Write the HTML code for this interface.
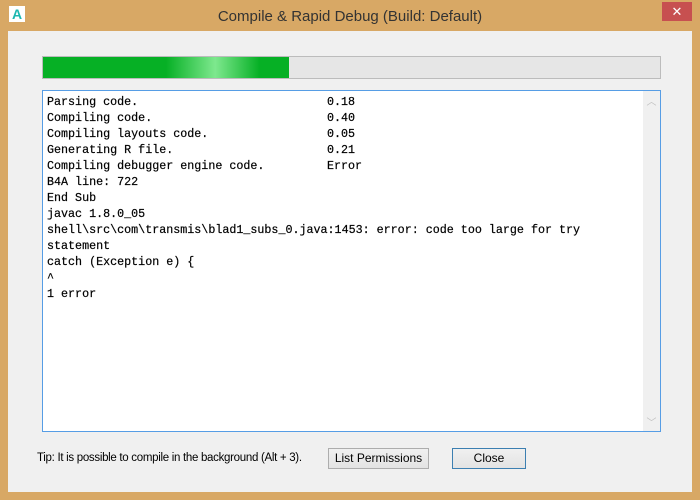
<!DOCTYPE html><html><head><style>
body{margin:0;width:700px;height:500px;background:#d8a865;position:relative;overflow:hidden;font-family:"Liberation Sans",sans-serif}
.abs{position:absolute}
#client{left:8px;top:31px;width:684px;height:461px;background:#f0f0f0}
#title{left:0;width:700px;top:8px;text-align:center;font-size:15px;color:#333}
#icon{left:9px;top:6px;width:16px;height:16px;background:#fff;color:#1cb8b0;font-weight:bold;font-size:14px;text-align:center;line-height:16px}
#x{left:662px;top:2px;width:30px;height:19px;background:#c75050;color:#fff;text-align:center;font-size:13px;line-height:19px}
#pb{left:42px;top:56px;width:617px;height:21px;background:#e6e6e6;border:1px solid #bcbcbc}
#fill{left:0;top:0;width:246px;height:21px;background:linear-gradient(90deg,#06b025 0%,#06b025 50%,#7ee88e 70%,#06b025 88%,#06b025 100%)}
#tb{left:42px;top:90px;width:617px;height:340px;background:#fff;border:1px solid #569de5}
#sb{right:0;top:0;width:17px;height:340px;background:#f0f0f0;color:#c0c0c0;font-size:10px;text-align:center}
pre{margin:0;position:absolute;left:4px;top:3px;font-family:"Liberation Mono",monospace;font-size:11.7px;line-height:16px;color:#000;-webkit-text-stroke:0.2px #000}
pre span{position:absolute;left:280px}
.btn{top:448px;height:19px;background:linear-gradient(#f0f0f0,#e3e3e3);border:1px solid #adadad;font-size:12px;text-align:center;line-height:19px;color:#000}
</style></head><body>
<div class="abs" id="client"></div>
<div class="abs" id="icon">A</div>
<div class="abs" id="title">Compile &amp; Rapid Debug (Build: Default)</div>
<div class="abs" id="x">✕</div>
<div class="abs" id="pb"><div class="abs" id="fill"></div></div>
<div class="abs" id="tb"><pre>Parsing code.<span>0.18</span>
Compiling code.<span>0.40</span>
Compiling layouts code.<span>0.05</span>
Generating R file.<span>0.21</span>
Compiling debugger engine code.<span>Error</span>
B4A line: 722
End Sub
javac 1.8.0_05
shell\src\com\transmis\blad1_subs_0.java:1453: error: code too large for try
statement
catch (Exception e) {
^
1 error</pre><div class="abs" id="sb"><div style="margin-top:2px">︿</div><div style="position:absolute;bottom:2px;width:17px">﹀</div></div></div>
<div class="abs" style="left:37px;top:452px;font-size:11.5px;letter-spacing:-0.3px;color:#000">Tip: It is possible to compile in the background (Alt + 3).</div>
<div class="abs btn" style="left:328px;width:99px">List Permissions</div>
<div class="abs btn" style="left:452px;width:72px;border-color:#3c7fb1">Close</div>
</body></html>
